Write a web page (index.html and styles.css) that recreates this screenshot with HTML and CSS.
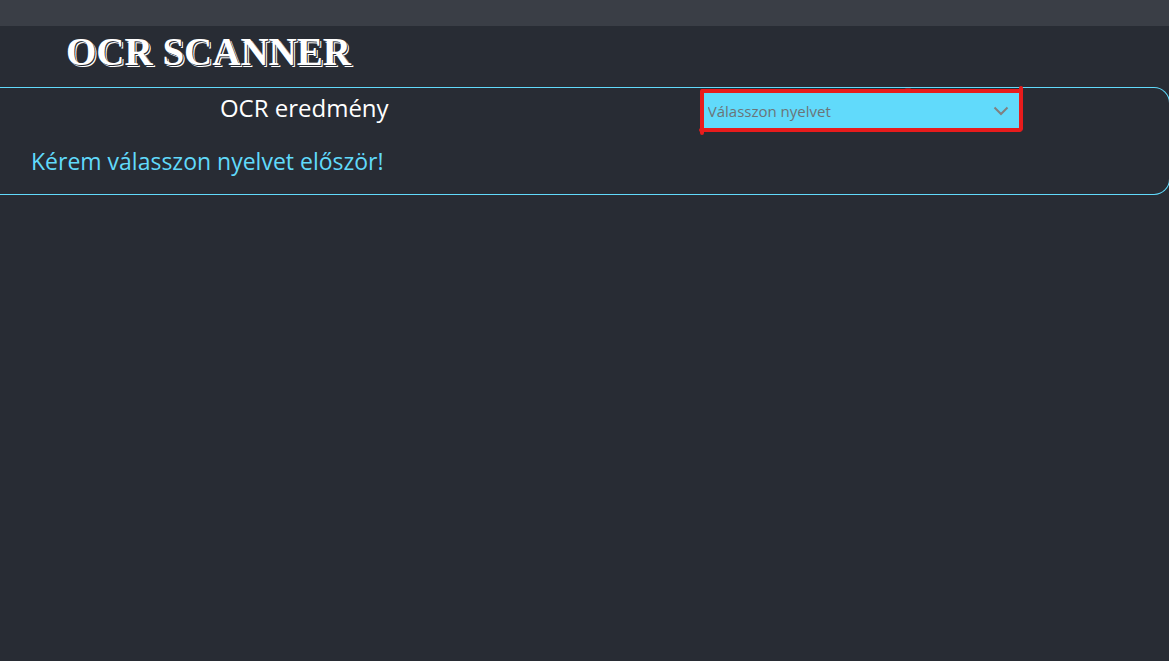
FILE: index.html
```html
<!DOCTYPE html>
<html lang="hu">
<head>
<meta charset="utf-8">
<title>OCR Scanner</title>
<link rel="stylesheet" href="styles.css">
</head>
<body>
<div class="topbar"></div>
<header class="header"><h1 class="brand">OCR SCANNER</h1></header>
<main class="panel">
  <div class="columns">
    <h2 class="title"><label for="language">OCR eredmény</label></h2>
    <div class="picker">
      <select class="language" id="language">
        <option>Válasszon nyelvet</option>
      </select>
      <svg class="chevron" viewBox="0 0 16 10" aria-hidden="true"><path d="M1.5 1.5 8 8l6.500-6.500"/></svg>
      <svg class="marker" viewBox="0 0 324 50" aria-hidden="true">
        <path d="M4 5H320M3 5V47M2 44H321M322 2V43"/>
        <path d="M207 4.500H211"/>
      </svg>
    </div>
  </div>
  <p class="message">Kérem válasszon nyelvet először!</p>
</main>
</body>
</html>
```
FILE: styles.css
```css
* {
  box-sizing: border-box;
}

body {
  margin: 0;
  min-height: 100vh;
  overflow-x: hidden;
  background: #282c34;
  color: #fff;
  font-family: "Segoe UI", "Open Sans", "Noto Sans", sans-serif;
}

.topbar {
  height: 26px;
  background: #3a3e46;
}

.header {
  padding: 3px 66px 12px;
}

.brand {
  margin: 0;
  font-family: Algerian, "Liberation Serif", serif;
  font-size: 39px;
  font-weight: bold;
  line-height: 46px;
  white-space: nowrap;
  text-shadow: 1px 1px 0 #282c34, 2px 2px 0 #fff;
}

.panel {
  margin-right: -1px;
  border: 1px solid #61dafb;
  border-left: 0;
  border-radius: 0 16px 16px 0;
  padding-bottom: 14px;
}

.columns {
  display: grid;
  grid-template-columns: 1fr 1fr;
  justify-items: center;
  padding: 0 30px 0 26px;
}

.title {
  margin: 0;
  font-size: 24px;
  font-weight: normal;
  line-height: 40px;
}

.picker {
  position: relative;
  width: 58%;
  max-width: 316px;
  min-width: 200px;
  padding-top: 4px;
}

.language {
  display: block;
  width: 100%;
  height: 36px;
  padding: 2px 30px 0 5px;
  appearance: none;
  border: 0;
  border-radius: 0;
  background: #61dafb;
  color: #6b7478;
  font-family: inherit;
  font-size: 15px;
}

.chevron {
  position: absolute;
  top: 18px;
  right: 10px;
  width: 16px;
  height: 10px;
  fill: none;
  stroke: #808080;
  stroke-width: 2;
  pointer-events: none;
}

.marker {
  position: absolute;
  top: -2px;
  left: -4px;
  width: 324px;
  height: 50px;
  fill: none;
  stroke: #e81c1c;
  stroke-width: 4;
  stroke-linecap: round;
  pointer-events: none;
}

.message {
  margin: 14px 0 0;
  padding: 0 31px;
  color: #61dafb;
  font-size: 23px;
  line-height: 38px;
}
```
